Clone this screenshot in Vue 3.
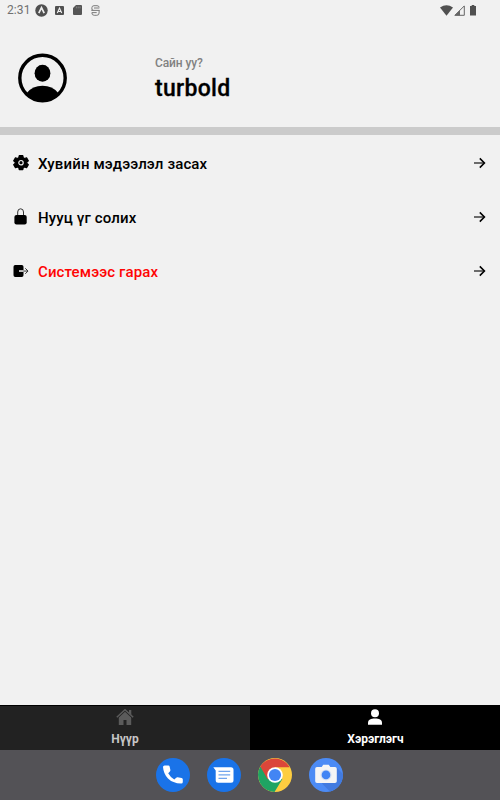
<script setup>
const rows = [
  { icon: 'gear', label: 'Хувийн мэдээлэл засах' },
  { icon: 'lock', label: 'Нууц үг солих' },
  { icon: 'exit', label: 'Системээс гарах', danger: true },
]
</script>

<template>
  <div class="screen">
    <header class="status">
      <span class="time">2:31</span>
      <svg class="app-badge" width="13" height="13" viewBox="0 0 13 13"><circle cx="6.5" cy="6.5" r="6.2" fill="#505050" /><path d="M3.8 9.200 6.500 3.700l2.700 5.500" fill="none" stroke="#eee" stroke-width="1.700" /></svg>
      <svg class="letter-badge" width="9" height="9" viewBox="0 0 9 9"><rect width="9" height="9" rx="1" fill="#505050" /><path d="M2.3 7 4.5 2l2.2 5M3.2 5.5h2.6" fill="none" stroke="#f2f2f2" stroke-width="1.1" /></svg>
      <svg class="card" width="9" height="10" viewBox="0 0 9 10"><path d="M3 0h5q1 0 1 1v8q0 1-1 1H1Q0 10 0 9V3z" fill="#555" /><path d="M3.4 1.5v1.8M5.2 1.5v1.8M7 1.5v1.8" stroke="#999" stroke-width=".7" /></svg>
      <svg class="s-badge" width="9" height="11" viewBox="0 0 9 11"><path d="M8.200 2.300Q8 .7 6 .7H3Q.9.7.9 2.700V4q0 1.300 1.500 1.300M3 3h5.300M.3 5.400h8.400M8.100 5.400V8q0 2.300-2.300 2.300H3.200Q.9 10.300.9 8V7.600h4.800" fill="none" stroke="#7c7c7c" stroke-width="1" /></svg>
      <span class="grow"></span>
      <svg class="wifi" width="13" height="11" viewBox="0 0 13 11"><path d="M0 2.500Q6.500-2 13 2.500L6.500 10.800z" fill="#505050" /></svg>
      <svg class="signal" width="11" height="11" viewBox="0 0 11 11"><path d="M.9 10.300 10.300.9v9.400z" fill="none" stroke="#666" /><path d="M.5 10.500 6 5v5.500z" fill="#666" /></svg>
      <svg class="battery" width="6" height="11" viewBox="0 0 6 11"><path d="M1.700 0h2.600v1H6v9.500H0V1h1.700z" fill="#505050" /></svg>
    </header>

    <section class="profile">
      <svg class="avatar" width="50" height="50" viewBox="0 0 50 50">
        <circle cx="25.500" cy="25" r="22.700" fill="none" stroke="#000" stroke-width="3.400" />
        <ellipse cx="25.500" cy="20.300" rx="7.900" ry="8.500" />
        <path d="M10 39.800Q15.500 32.700 25.500 32.700t15.500 7.100Q34.500 48.200 25.500 48.200T10 39.800z" />
      </svg>
      <div class="who">
        <span class="hello">Сайн уу?</span>
        <strong class="name">turbold</strong>
      </div>
    </section>

    <main class="menu">
      <div v-for="r in rows" :key="r.icon" class="row" :class="r.icon">
        <svg class="icon" width="18" height="18" viewBox="0 0 18 18">
          <g v-if="r.icon === 'gear'">
            <path d="M7 1h4l.5 2.400 1.500.9 2.300-.8 2 3.400L15.500 8.500v1.200l1.800 1.600-2 3.400-2.300-.8-1.500.9L11 17H7l-.5-2.200-1.500-.9-2.300.8-2-3.400 1.800-1.600V8.500L.7 6.900l2-3.400 2.300.8 1.500-.9z" transform="translate(1.100 .7) scale(.88)" stroke="#000" stroke-width="1.400" stroke-linejoin="round" />
            <circle cx="9" cy="8.700" r="2.200" fill="none" stroke="#eee" stroke-width="1.200" />
          </g>
          <g v-else-if="r.icon === 'lock'">
            <path d="M5.700 8V4a2.900 3.200 0 0 1 5.800 0V8" fill="none" stroke="#333" stroke-width="1" />
            <rect x="2.400" y="7" width="12.300" height="9.500" rx="2.100" />
          </g>
          <g v-else>
            <path d="M3.200 3h6.600q1.700 0 1.700 1.700v3.800H7v1.100h4.500v3.700q0 1.700-1.700 1.700H3.200q-1.700 0-1.700-1.700V4.700Q1.500 3 3.200 3z" />
            <path d="M7 9.050h4.500" stroke="#eee" stroke-width="1.100" /><path d="M11.500 9.050h4.200M13.300 6.300 16 9.050l-2.700 2.750" fill="none" stroke="#333" stroke-width="1" />
          </g>
        </svg>
        <span class="label" :class="{ danger: r.danger }">{{ r.label }}</span>
        <svg class="arrow" width="13" height="12" viewBox="0 0 13 12"><path d="M1 6h10" stroke="#222" stroke-width="1.300" /><path d="m6.800 1.400 4.600 4.600-4.600 4.600" fill="none" stroke="#000" stroke-width="1.600" /></svg>
      </div>
    </main>

    <nav class="tabs">
      <div class="tab">
        <svg width="18" height="18" viewBox="0 0 18 18" fill="#5b5b5b"><path d="M9 3.800 15.200 9.500V17h-4.700v-5h-3v5H2.800V9.500z" /><path d="M.8 9.300 9 1.800l8.200 7.500" fill="none" stroke="#5b5b5b" stroke-width="1.500" /><path d="M13 2h2.300v5L13 5z" /></svg>
        <span class="home">Нүүр</span>
      </div>
      <div class="tab active">
        <svg width="18" height="18" viewBox="0 0 18 18" fill="#fff"><circle cx="9" cy="5.200" r="4" /><path d="M2 16.700v-1.600C2 11.700 5 10.600 9 10.600s7 1.100 7 4.500v1.600z" /></svg>
        <span class="user">Хэрэглэгч</span>
      </div>
    </nav>

    <footer class="dock">
      <svg width="34" height="34" viewBox="0 0 34 34">
        <circle cx="17" cy="17" r="17" fill="#1a73e8" />
        <path d="M8.600 7.400h3.800q1 0 1.200 1l.8 3.600q.1.900-.5 1.500l-1.700 1.700q2.300 4.200 6.100 6.200l1.900-1.700q.6-.5 1.400-.4l4 .7q1.200.3 1.200 1.300v2.700q0 1.600-1.600 1.600Q16.500 25.200 12 20.500T7 9q0-1.600 1.600-1.600z" fill="#fff" />
      </svg>
      <svg width="34" height="34" viewBox="0 0 34 34">
        <circle cx="17" cy="17" r="17" fill="#1a73e8" />
        <path d="M6.300 9.300H24q2.500 0 2.500 2.500v10.500q0 2.500-2.500 2.500H11.200q-2.500 0-2.500-2.500V12.500z" fill="#fff" />
        <path d="M11.500 13.300h11.700M11.500 16.800h11.700M11.500 20.300h8.500" stroke="#72a5ed" stroke-width="1.300" />
      </svg>
      <svg width="34" height="34" viewBox="0 0 34 34">
        <circle cx="17" cy="17" r="17" fill="#fdcd40" />
        <path d="M17 17 2.300 8.500A17 17 0 0 0 16.500 34L24.400 21z" fill="#1fa463" />
        <path d="M17 17 9.600 21.300 2.300 8.500A17 17 0 0 1 31.700 9.300H17z" fill="#db4639" />
        <circle cx="17" cy="17" r="7.800" fill="#fff" /><circle cx="17" cy="17" r="6.100" fill="#4285f4" />
      </svg>
      <svg width="34" height="34" viewBox="0 0 34 34">
        <circle cx="17" cy="17" r="17" fill="#4c8bf5" />
        <path d="M27.500 9.500 34 16a17 17 0 0 1-13 17.500L13 25.500z" fill="#427be0" />
        <path d="M8 9h4.700l1.500-2.300h5.600L21.300 9H26q1.800 0 1.800 1.800v12.400Q27.800 25 26 25H8q-1.800 0-1.800-1.800V10.800Q6.200 9 8 9z" fill="#f5f5f5" />
        <circle cx="17" cy="16.900" r="5.500" fill="#d5e1f4" /><circle cx="17" cy="16.900" r="4.300" fill="#4285f4" />
      </svg>
    </footer>
  </div>
</template>

<style>
body { margin: 0; }
</style>

<style scoped>
.screen {
  display: flex;
  flex-direction: column;
  width: 500px;
  height: 800px;
  overflow: hidden;
  background: #f1f1f1;
  color: #000;
  font-family: Roboto, "Noto Sans", sans-serif;
}
svg { display: block; flex: none; }
.status {
  display: flex;
  align-items: center;
  box-sizing: border-box;
  height: 20px;
  padding: 0 24px 0 7px;
}
.time { width: 28px; font-size: 12px; line-height: 20px; letter-spacing: .1px; color: #707070; }
.letter-badge { margin-left: 7px; }
.card { margin-left: 9px; }
.s-badge { margin-left: 9px; }
.grow { flex: 1; }
.signal { margin-left: 1px; }
.battery { margin-left: 5px; }
.profile {
  display: flex;
  box-sizing: border-box;
  height: 115px;
  padding: 33px 0 0 17px;
  border-bottom: 8px solid #cbcbcb;
}
.who { display: flex; flex-direction: column; margin: 2px 0 0 88px; }
.hello { font-size: 12px; line-height: 16px; letter-spacing: -.1px; font-weight: 500; color: #818181; }
.name { margin-top: 4px; font-size: 23px; line-height: 28px; letter-spacing: .3px; font-weight: 500; -webkit-text-stroke: .3px #000; }
.menu { flex: 1; padding-top: 1px; }
.row {
  display: flex;
  align-items: center;
  box-sizing: border-box;
  height: 54px;
  padding: 0 14px 0 12px;
}
.label { flex: 1; margin-left: 8px; padding-top: 1px; font-size: 15px; line-height: 20px; letter-spacing: .13px; font-weight: 500; }
.danger { color: #ff0404; }
.tabs {
  display: flex;
  box-sizing: border-box;
  height: 45px;
  border-top: 1px solid #000;
  background: #222;
}
.tab {
  display: flex;
  flex: 1;
  flex-direction: column;
  align-items: center;
  padding-top: 2px;
  color: #c6c6c6;
  font-size: 12px;
  line-height: 16px;
  font-weight: 700;
}
.tab span { margin-top: 5px; }
.tab .user { padding-left: 1px; }
.active { background: #000; color: #fff; }
.dock {
  display: flex;
  align-items: center;
  justify-content: center;
  gap: 17.3px;
  height: 50px;
  padding-right: 1px;
  background: #535256;
}
</style>
